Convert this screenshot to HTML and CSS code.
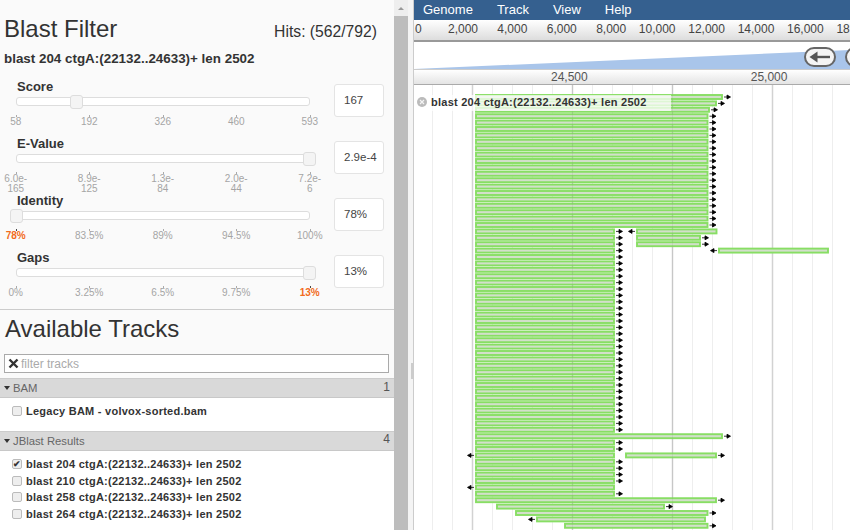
FILE: index.html
```html
<!DOCTYPE html>
<html lang="en">

<head>
 <meta charset="UTF-8">
 <title>JBrowse - Blast Filter</title>
 <link rel="stylesheet" href="styles.css">
</head>

<body>
 <div class="sidebar">
  <div class="filter">
   <div class="filter-head">
    <h1>Blast Filter</h1>
    <span class="hits">Hits: (562/792)</span>
   </div>
   <h2 class="blast-name">blast 204 ctgA:(22132..24633)+ len 2502</h2>

   <div class="slider">
    <div class="slider-main">
     <div class="slider-label">Score</div>
     <div class="track"><span class="handle" style="left: 53px"></span></div>
     <div class="ticks">
      <span>58</span><span>192</span><span>326</span><span>460</span><span>593</span>
     </div>
    </div>
    <div class="value">167</div>
   </div>

   <div class="slider">
    <div class="slider-main">
     <div class="slider-label">E-Value</div>
     <div class="track"><span class="handle" style="left: 286px"></span></div>
     <div class="ticks">
      <span>6.0e-<br>165</span><span>8.9e-<br>125</span><span>1.3e-<br>84</span><span>2.0e-<br>44</span><span>7.2e-<br>6</span>
     </div>
    </div>
    <div class="value">2.9e-4</div>
   </div>

   <div class="slider">
    <div class="slider-main">
     <div class="slider-label">Identity</div>
     <div class="track"><span class="handle" style="left: -7px"></span></div>
     <div class="ticks">
      <span class="on">78%</span><span>83.5%</span><span>89%</span><span>94.5%</span><span>100%</span>
     </div>
    </div>
    <div class="value">78%</div>
   </div>

   <div class="slider">
    <div class="slider-main">
     <div class="slider-label">Gaps</div>
     <div class="track"><span class="handle" style="left: 286px"></span></div>
     <div class="ticks">
      <span>0%</span><span>3.25%</span><span>6.5%</span><span>9.75%</span><span class="on">13%</span>
     </div>
    </div>
    <div class="value">13%</div>
   </div>
  </div>

  <div class="tracks">
   <h1>Available Tracks</h1>
   <div class="search">
    <svg class="search-x" width="11" height="11" viewBox="0 0 11 11"><path d="M1.5 1.5l8 8M9.5 1.5l-8 8" /></svg>
    <span>filter tracks</span>
   </div>

   <div class="cat">
    <div class="cat-head"><span class="caret"></span><span class="cat-name">BAM</span><span class="cat-count">1</span></div>
    <div class="cat-body">
     <label class="item"><span class="check"></span>Legacy BAM - volvox-sorted.bam</label>
    </div>
   </div>

   <div class="cat">
    <div class="cat-head"><span class="caret"></span><span class="cat-name">JBlast Results</span><span class="cat-count">4</span></div>
    <div class="cat-body">
     <label class="item"><span class="check checked">&#10004;</span>blast 204 ctgA:(22132..24633)+ len 2502</label>
     <label class="item"><span class="check"></span>blast 210 ctgA:(22132..24633)+ len 2502</label>
     <label class="item"><span class="check"></span>blast 258 ctgA:(22132..24633)+ len 2502</label>
     <label class="item"><span class="check"></span>blast 264 ctgA:(22132..24633)+ len 2502</label>
    </div>
   </div>
  </div>
 </div>

 <div class="scrollbar">
  <div class="scroll-up"></div>
  <div class="scroll-thumb"></div>
 </div>
 <div class="splitter"><span class="grip"></span></div>

 <div class="browser">
  <nav class="menu">
   <a>Genome</a><a>Track</a><a>View</a><a>Help</a>
  </nav>

  <div class="overview">
   <span class="first">0</span><span>2,000</span><span>4,000</span><span>6,000</span><span>8,000</span><span>10,000</span><span>12,000</span><span>14,000</span><span>16,000</span><span>18,000</span>
  </div>

  <div class="location">
   <svg class="wedge" width="437" height="27" viewBox="0 0 437 27"><polygon points="0,27 437,8 437,27" /></svg>
   <div class="nav-btn first-btn">
    <svg width="32" height="20" viewBox="0 0 32 20"><rect x="1" y="1" width="30" height="18" rx="9" class="pill" /><path d="M26 10H9" class="pill-shaft" /><path d="M5.5 10l8-5.5v11z" class="pill-head" /></svg>
   </div>
   <div class="nav-btn second-btn">
    <svg width="32" height="20" viewBox="0 0 32 20"><rect x="1" y="1" width="30" height="18" rx="9" class="pill" /><path d="M26 10H9" class="pill-shaft" /><path d="M5.5 10l8-5.5v11z" class="pill-head" /></svg>
   </div>
  </div>

  <div class="scale">
   <span>24,500</span><span>25,000</span>
  </div>

  <div class="canvas">
   <svg class="features" width="436" height="446" viewBox="414 84 436 446">
    <defs>
     <g id="full"><rect x="476" y="-2" width="231.5" height="4" class="hit" /><path d="M709.5 0h4M712.5 -2l3.5 2-3.5 2z" class="arrow" /></g>
     <g id="half"><rect x="476" y="-2" width="138" height="4" class="hit" /><path d="M616 0h4M619 -2l3.5 2-3.5 2z" class="arrow" /></g>
     <g id="half-bare"><rect x="476" y="-2" width="138" height="4" class="hit" /></g>
    </defs>

    <!-- grid -->
    <path class="grid-minor" d="M432.5 84V530M452.5 84V530M492.5 84V530M512.5 84V530M532.5 84V530M552.5 84V530M592.5 84V530M612.5 84V530M632.5 84V530M652.5 84V530M692.5 84V530M712.5 84V530M732.5 84V530M752.5 84V530M792.5 84V530M812.5 84V530M832.5 84V530" />
    <path class="grid-major" d="M472.5 84V530M572.5 84V530M672.5 84V530M772.5 84V530" />

    <!-- first rows run past the others -->
    <g transform="translate(0 96)"><rect x="476" y="-2" width="246" height="4" class="hit" /><path d="M724 0h4M727 -2l3.5 2-3.5 2z" class="arrow" /></g>
    <g transform="translate(0 102.4)"><rect x="476" y="-2" width="240" height="4" class="hit" /><path d="M718 0h4M721 -2l3.5 2-3.5 2z" class="arrow" /></g>
    <g transform="translate(0 108.8)"><rect x="476" y="-2" width="233" height="4" class="hit" /><path d="M711 0h4M714 -2l3.5 2-3.5 2z" class="arrow" /></g>

    <use href="#full" y="115.2" /><use href="#full" y="121.6" /><use href="#full" y="128" />
    <use href="#full" y="134.4" /><use href="#full" y="140.8" /><use href="#full" y="147.2" />
    <use href="#full" y="153.6" /><use href="#full" y="160" /><use href="#full" y="166.4" />
    <use href="#full" y="172.8" /><use href="#full" y="179.2" /><use href="#full" y="185.6" />
    <use href="#full" y="192" /><use href="#full" y="198.4" /><use href="#full" y="204.8" />
    <use href="#full" y="211.2" /><use href="#full" y="217.6" /><use href="#full" y="224" />

    <use href="#half" y="230.4" /><use href="#half" y="236.8" /><use href="#half" y="243.2" />
    <use href="#half" y="249.6" /><use href="#half" y="256" /><use href="#half" y="262.4" />
    <use href="#half" y="268.8" /><use href="#half" y="275.2" /><use href="#half" y="281.6" />
    <use href="#half" y="288" /><use href="#half" y="294.4" /><use href="#half" y="300.8" />
    <use href="#half" y="307.2" /><use href="#half" y="313.6" /><use href="#half" y="320" />
    <use href="#half" y="326.4" /><use href="#half" y="332.8" /><use href="#half" y="339.2" />
    <use href="#half" y="345.6" /><use href="#half" y="352" /><use href="#half" y="358.4" />
    <use href="#half" y="364.8" /><use href="#half" y="371.2" /><use href="#half" y="377.6" />
    <use href="#half" y="384" /><use href="#half" y="390.4" /><use href="#half" y="396.8" />
    <use href="#half" y="403.2" /><use href="#half" y="409.6" /><use href="#half" y="416" />
    <use href="#half" y="422.4" /><use href="#half" y="428.8" />

    <!-- side hits right of the gap -->
    <g transform="translate(0 230.4)"><rect x="637" y="-2" width="79.5" height="4" class="hit" /><path d="M631 0h4M632 -2l-3.5 2 3.5 2z" class="arrow" /></g>
    <g transform="translate(0 236.8)"><rect x="637" y="-2" width="63" height="4" class="hit" /><path d="M702 0h4M705 -2l3.5 2-3.5 2z" class="arrow" /></g>
    <g transform="translate(0 243.2)"><rect x="637" y="-2" width="63" height="4" class="hit" /><path d="M702 0h4M705 -2l3.5 2-3.5 2z" class="arrow" /></g>
    <g transform="translate(0 249.6)"><rect x="719" y="-2" width="109" height="4" class="hit" /><path d="M713 0h4M714 -2l-3.5 2 3.5 2z" class="arrow" /></g>

    <g transform="translate(0 435.2)"><rect x="476" y="-2" width="246" height="4" class="hit" /><path d="M724 0h4M727 -2l3.5 2-3.5 2z" class="arrow" /></g>
    <use href="#half" y="441.6" /><use href="#half" y="448" />
    <use href="#half-bare" y="454.4" />
    <g transform="translate(0 454.4)"><path d="M470 0h4M471 -2l-3.5 2 3.5 2z" class="arrow" /><rect x="626" y="-2" width="90" height="4" class="hit" /><path d="M718 0h4M721 -2l3.5 2-3.5 2z" class="arrow" /></g>
    <use href="#half" y="460.8" /><use href="#half" y="467.2" /><use href="#half" y="473.6" /><use href="#half" y="480" />
    <use href="#half-bare" y="486.4" />
    <g transform="translate(0 486.4)"><path d="M470 0h4M471 -2l-3.5 2 3.5 2z" class="arrow" /></g>
    <use href="#half" y="492.8" />
    <g transform="translate(0 499.2)"><rect x="476" y="-2" width="240" height="4" class="hit" /><path d="M718 0h4M721 -2l3.5 2-3.5 2z" class="arrow" /></g>
    <g transform="translate(0 505.6)"><rect x="497" y="-2" width="167" height="4" class="hit" /><path d="M666 0h4M669 -2l3.5 2-3.5 2z" class="arrow" /></g>
    <g transform="translate(0 512)"><rect x="516" y="-2" width="191.5" height="4" class="hit" /><path d="M709.5 0h4M712.5 -2l3.5 2-3.5 2z" class="arrow" /></g>
    <g transform="translate(0 518.4)"><path d="M531 0h4M532 -2l-3.5 2 3.5 2z" class="arrow" /><rect x="537" y="-2" width="168" height="4" class="hit" /></g>
    <g transform="translate(0 524.8)"><rect x="565" y="-2" width="142.5" height="4" class="hit" /><path d="M709.5 0h4M712.5 -2l3.5 2-3.5 2z" class="arrow" /></g>

    <!-- grid shows faintly through the bars -->
    <path class="grid-over" d="M572.5 84V530M672.5 84V530" />
   </svg>

   <div class="track-label">
    <svg class="close" width="10" height="10" viewBox="0 0 10 10"><circle cx="5" cy="5" r="5" /><path d="M3 3l4 4M7 3l-4 4" /></svg>
    blast 204 ctgA:(22132..24633)+ len 2502
   </div>
  </div>
 </div>
</body>

</html>
```

FILE: styles.css
```css
* {
 box-sizing: border-box;
}

html,
body {
 height: 100%;
}

body {
 margin: 0;
 display: flex;
 overflow: hidden;
 font-family: 'Liberation Sans', Arial, sans-serif;
 color: #333;
 background-color: #fff;
}

h1,
h2 {
 margin: 0;
 font-weight: normal;
}

/* left panel */
.sidebar {
 width: 394px;
 flex: none;
 background-color: #fafafa;
 height: 530px;
 overflow: hidden;
}

.filter {
 height: 310px;
 padding: 0 9px 0 4px;
 border-bottom: 1px solid #ccc;
}

.filter-head {
 display: flex;
 justify-content: space-between;
 align-items: baseline;
 padding-top: 14px;
 padding-right: 8px;
}

.filter h1 {
 font-size: 24px;
 line-height: 30px;
}

.hits {
 font-size: 15.7px;
}

.blast-name {
 font-size: 13.4px;
 font-weight: bold;
 line-height: 16px;
 margin-top: 7px;
 margin-bottom: 5px;
}

.slider {
 display: flex;
 height: 57px;
 padding-left: 12px;
}

.slider-main {
 width: 294px;
 flex: none;
}

.slider-label {
 font-size: 13px;
 font-weight: bold;
 line-height: 16px;
 margin-top: 7px;
 padding-left: 1px;
}

.track {
 position: relative;
 height: 9px;
 margin-top: 2px;
 background-color: #fff;
 border: 1px solid #ddd;
 border-radius: 3px;
}

.handle {
 position: absolute;
 top: -3px;
 width: 13px;
 height: 14px;
 background-color: #f4f4f4;
 border: 1px solid #ddd;
 border-radius: 3px;
}

.ticks {
 display: grid;
 grid-template-columns: repeat(5, 73.5px);
 margin: 9px 0 0 -37px;
 font-size: 10px;
 line-height: 10px;
 color: #a5a5a5;
 text-align: center;
}

.ticks span {
 padding-top: 2px;
 position: relative;
}

.ticks span::before {
 content: '';
 position: absolute;
 left: 50%;
 top: 0;
 width: 1px;
 height: 2px;
 background-color: #aaa;
}

.ticks .on {
 color: #f26b21;
 font-weight: bold;
}

.ticks .on::before {
 background-color: #444;
}

.value {
 width: 50px;
 height: 33px;
 margin: 12px 0 0 24px;
 padding-left: 9px;
 font-size: 11.5px;
 line-height: 31px;
 background-color: #fff;
 border: 1px solid #e4e4e4;
 border-radius: 3px;
 color: #444;
}

.tracks h1 {
 font-size: 24px;
 line-height: 30px;
 padding: 4px 0 0 5px;
}

.search {
 display: flex;
 align-items: center;
 gap: 2px;
 height: 19px;
 margin: 10px 5px 5px 4px;
 padding-left: 3px;
 font-size: 12px;
 color: #aaa;
 background-color: #fff;
 border: 1px solid #aaa;
}

.search-x path {
 fill: none;
 stroke: #333;
 stroke-width: 2.4;
}

.cat-head {
 display: flex;
 align-items: center;
 height: 20px;
 padding: 0 4px 0 4px;
 font-size: 11.3px;
 color: #666;
 background-color: #d9d9d9;
 border-top: 1px solid #ccc;
 border-bottom: 1px solid #c8c8c8;
}

.caret {
 width: 0;
 height: 0;
 margin-right: 3px;
 border: 3px solid transparent;
 border-top: 4px solid #333;
 border-bottom: 0;
}

.cat-name {
 flex: 1;
}

.cat-count {
 margin-top: -3px;
 font-size: 12px;
 color: #555;
}

.cat-body {
 padding: 5px 0 11px 12px;
 background-color: #fff;
}

.item {
 display: flex;
 align-items: center;
 height: 16.7px;
 font-size: 11px;
 font-weight: bold;
 letter-spacing: .25px;
 color: #333;
}

.check {
 width: 10px;
 height: 10px;
 margin-right: 4px;
 font-size: 9px;
 line-height: 9px;
 text-align: center;
 letter-spacing: 0;
 background-color: #eee;
 border: 1px solid #bbb;
 border-radius: 2px;
}

.checked {
 color: #333;
}

/* scrollbar and splitter */
.scrollbar {
 width: 14px;
 flex: none;
 background-color: #eee;
}

.scroll-up {
 height: 16px;
 position: relative;
}

.scroll-up::after {
 content: '';
 position: absolute;
 left: 4px;
 top: 7px;
 border: 3px solid transparent;
 border-bottom: 3px solid #999;
 border-top: 0;
}

.scroll-thumb {
 height: 514px;
 background-color: #bdbdbd;
}

.splitter {
 width: 5px;
 flex: none;
 position: relative;
 background-color: #f4f4f4;
}

.grip {
 position: absolute;
 left: 3px;
 top: 363px;
 width: 2px;
 height: 16px;
 background-color: #ccc;
}

/* genome view */
.browser {
 flex: 1;
 min-width: 0;
 display: flex;
 flex-direction: column;
 border-left: 1px solid #ccc;
}

.menu {
 display: flex;
 gap: 24px;
 height: 20px;
 padding-left: 9px;
 font-size: 13px;
 line-height: 19px;
 color: #fff;
 background-color: #35608f;
}

.overview {
 display: flex;
 height: 22px;
 overflow: hidden;
 font-size: 12px;
 line-height: 19px;
 color: #444;
 background: linear-gradient(#fff, #ddd);
 border-bottom: 2px solid #999;
 white-space: nowrap;
}

.overview span {
 flex: none;
 width: 49.4px;
 text-align: right;
}

.overview .first {
 width: 14.6px;
 text-align: left;
 padding-left: 1px;
}

.location {
 position: relative;
 height: 27px;
 background-color: #fff;
}

.wedge {
 display: block;
}

.wedge polygon {
 fill: #a9c5ea;
}

.nav-btn {
 position: absolute;
 top: 5px;
 height: 20px;
}

.first-btn {
 left: 390px;
}

.second-btn {
 left: 431px;
}

.pill {
 fill: #f4f4f4;
 stroke: #666;
 stroke-width: 2;
}

.pill-shaft {
 fill: none;
 stroke: #555;
 stroke-width: 2.4;
}

.pill-head {
 fill: #555;
}

.scale {
 display: flex;
 gap: 163px;
 height: 16px;
 padding-left: 137px;
 font-size: 12px;
 line-height: 15px;
 color: #555;
 background: linear-gradient(#fff, #e4e4e4);
 border-top: 1px solid #ccc;
 border-bottom: 1px solid #aaa;
}

.canvas {
 position: relative;
 flex: 1;
 overflow: hidden;
 background-color: #fff;
}

.features {
 display: block;
}

.grid-minor {
 fill: none;
 stroke: #eee;
}

.grid-major {
 fill: none;
 stroke: #d2d2d2;
 stroke-width: 1.5;
}

.grid-over {
 fill: none;
 stroke: rgba(120, 120, 120, .12);
}

.hit {
 fill: #d2dfca;
 stroke: #88de64;
 stroke-width: 1.9;
}

.arrow {
 fill: #000;
 stroke: #000;
 stroke-width: .8;
}

.track-label {
 position: absolute;
 left: 0;
 top: 10px;
 width: 257px;
 height: 16px;
 padding: 0 0 2px 3px;
 display: flex;
 align-items: center;
 gap: 4px;
 font-size: 11px;
 font-weight: bold;
 letter-spacing: .25px;
 color: #333;
 background-color: rgba(255, 255, 255, .72);
 white-space: nowrap;
}

.close circle {
 fill: #bbb;
}

.close path {
 fill: none;
 stroke: #f4f4f4;
 stroke-width: 1.2;
}
```
